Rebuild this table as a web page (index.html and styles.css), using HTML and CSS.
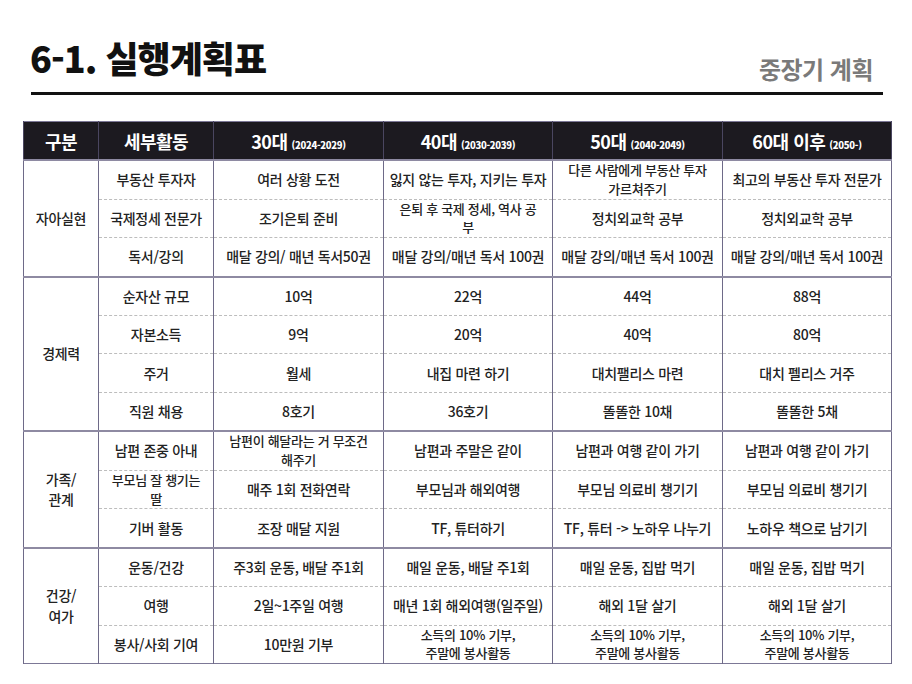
FILE: index.html
```html
<!DOCTYPE html>
<html lang="ko">
<head>
<meta charset="utf-8">
<title>6-1. 실행계획표</title>
<link rel="stylesheet" href="styles.css">
</head>
<body>
<header class="page-head">
  <h1 class="title">6-1. 실행계획표</h1>
  <div class="subtitle">중장기 계획</div>
</header>
<table class="plan">
  <colgroup>
    <col class="c-cat"><col class="c-act"><col class="c-age"><col class="c-age2"><col class="c-age"><col class="c-age2">
  </colgroup>
  <thead>
    <tr>
      <th>구분</th>
      <th>세부활동</th>
      <th>30대<span class="yr">(2024-2029)</span></th>
      <th>40대<span class="yr">(2030-2039)</span></th>
      <th>50대<span class="yr">(2040-2049)</span></th>
      <th>60대 이후<span class="yr">(2050-)</span></th>
    </tr>
  </thead>
  <tbody>
    <tr class="sec">
      <td class="cat" rowspan="3">자아실현</td>
      <td>부동산 투자자</td><td>여러 상황 도전</td><td>잃지 않는 투자, 지키는 투자</td><td class="two">다른 사람에게 부동산 투자<br>가르쳐주기</td><td>최고의 부동산 투자 전문가</td>
    </tr>
    <tr>
      <td>국제정세 전문가</td><td>조기은퇴 준비</td><td class="two">은퇴 후 국제 정세, 역사 공<br>부</td><td>정치외교학 공부</td><td>정치외교학 공부</td>
    </tr>
    <tr>
      <td>독서/강의</td><td>매달 강의/ 매년 독서50권</td><td>매달 강의/매년 독서 100권</td><td>매달 강의/매년 독서 100권</td><td>매달 강의/매년 독서 100권</td>
    </tr>
    <tr class="sec">
      <td class="cat" rowspan="4">경제력</td>
      <td>순자산 규모</td><td>10억</td><td>22억</td><td>44억</td><td>88억</td>
    </tr>
    <tr>
      <td>자본소득</td><td>9억</td><td>20억</td><td>40억</td><td>80억</td>
    </tr>
    <tr>
      <td>주거</td><td>월세</td><td>내집 마련 하기</td><td>대치팰리스 마련</td><td>대치 펠리스 거주</td>
    </tr>
    <tr>
      <td>직원 채용</td><td>8호기</td><td>36호기</td><td>똘똘한 10채</td><td>똘똘한 5채</td>
    </tr>
    <tr class="sec">
      <td class="cat catwrap" rowspan="3">가족/<br>관계</td>
      <td>남편 존중 아내</td><td class="two">남편이 해달라는 거 무조건<br>해주기</td><td>남편과 주말은 같이</td><td>남편과 여행 같이 가기</td><td>남편과 여행 같이 가기</td>
    </tr>
    <tr>
      <td class="two">부모님 잘 챙기는<br>딸</td><td>매주 1회 전화연락</td><td>부모님과 해외여행</td><td>부모님 의료비 챙기기</td><td>부모님 의료비 챙기기</td>
    </tr>
    <tr>
      <td>기버 활동</td><td>조장 매달 지원</td><td>TF, 튜터하기</td><td>TF, 튜터 -&gt; 노하우 나누기</td><td>노하우 책으로 남기기</td>
    </tr>
    <tr class="sec">
      <td class="cat catwrap" rowspan="3">건강/<br>여가</td>
      <td>운동/건강</td><td>주3회 운동, 배달 주1회</td><td>매일 운동, 배달 주1회</td><td>매일 운동, 집밥 먹기</td><td>매일 운동, 집밥 먹기</td>
    </tr>
    <tr>
      <td>여행</td><td>2일~1주일 여행</td><td>매년 1회 해외여행(일주일)</td><td>해외 1달 살기</td><td>해외 1달 살기</td>
    </tr>
    <tr>
      <td>봉사/사회 기여</td><td>10만원 기부</td><td class="two">소득의 10% 기부,<br>주말에 봉사활동</td><td class="two">소득의 10% 기부,<br>주말에 봉사활동</td><td class="two">소득의 10% 기부,<br>주말에 봉사활동</td>
    </tr>
  </tbody>
</table>
</body>
</html>
```

FILE: styles.css
```css
html, body {
  margin: 0;
  padding: 0;
  background: #ffffff;
}

body {
  width: 912px;
  height: 684px;
  overflow: hidden;
  font-family: "Noto Sans CJK KR", "Noto Sans", sans-serif;
  color: #222222;
}

.page-head {
  display: flex;
  justify-content: space-between;
  align-items: flex-end;
  margin: 0 29px 0 31px;
  padding-top: 39px;
  padding-bottom: 11px;
  border-bottom: 3px solid #111111;
}

.title {
  margin: 0 0 6px -1px;
  font-size: 36px;
  line-height: 1;
  font-weight: 900;
  letter-spacing: -1px;
  color: #111111;
}

.subtitle {
  margin-right: 10px;
  font-size: 24px;
  line-height: 1;
  font-weight: 700;
  color: #7a7a7a;
  letter-spacing: -0.5px;
}

.plan {
  margin: 26px 0 0 23px;
  width: 869px;
  border-collapse: collapse;
  table-layout: fixed;
  border: 1px solid #7c7896;
}

.c-cat { width: 75px; }
.c-act { width: 115px; }
.c-age { width: 170px; }
.c-age2 { width: 169px; }

.plan th {
  height: 37px;
  padding: 0;
  background: #1c1a20;
  color: #ffffff;
  font-size: 18px;
  font-weight: 700;
  letter-spacing: -0.5px;
  border-left: 1px solid #4a4660;
  border-right: 1px solid #4a4660;
  white-space: nowrap;
}

.plan th .yr {
  font-size: 9.5px;
  font-weight: 800;
  letter-spacing: -0.3px;
  margin-left: 4px;
}

.plan td {
  height: 37.4px;
  padding: 0 2px;
  text-align: center;
  vertical-align: middle;
  font-size: 14px;
  font-weight: 500;
  line-height: 17px;
  letter-spacing: -0.3px;
  white-space: nowrap;
  border-left: 1px solid #6e6a88;
  border-right: 1px solid #6e6a88;
  border-top: 1px dashed #bdbdbd;
}

.plan tr.sec td {
  border-top: 2px solid #8e8aa2;
}

.plan td.cat {
  border-top: 2px solid #8e8aa2;
}

.plan td.two {
  padding: 0 1px;
  font-size: 13px;
  line-height: 18.8px;
}

.plan td.catwrap {
  line-height: 20.5px;
}
```
